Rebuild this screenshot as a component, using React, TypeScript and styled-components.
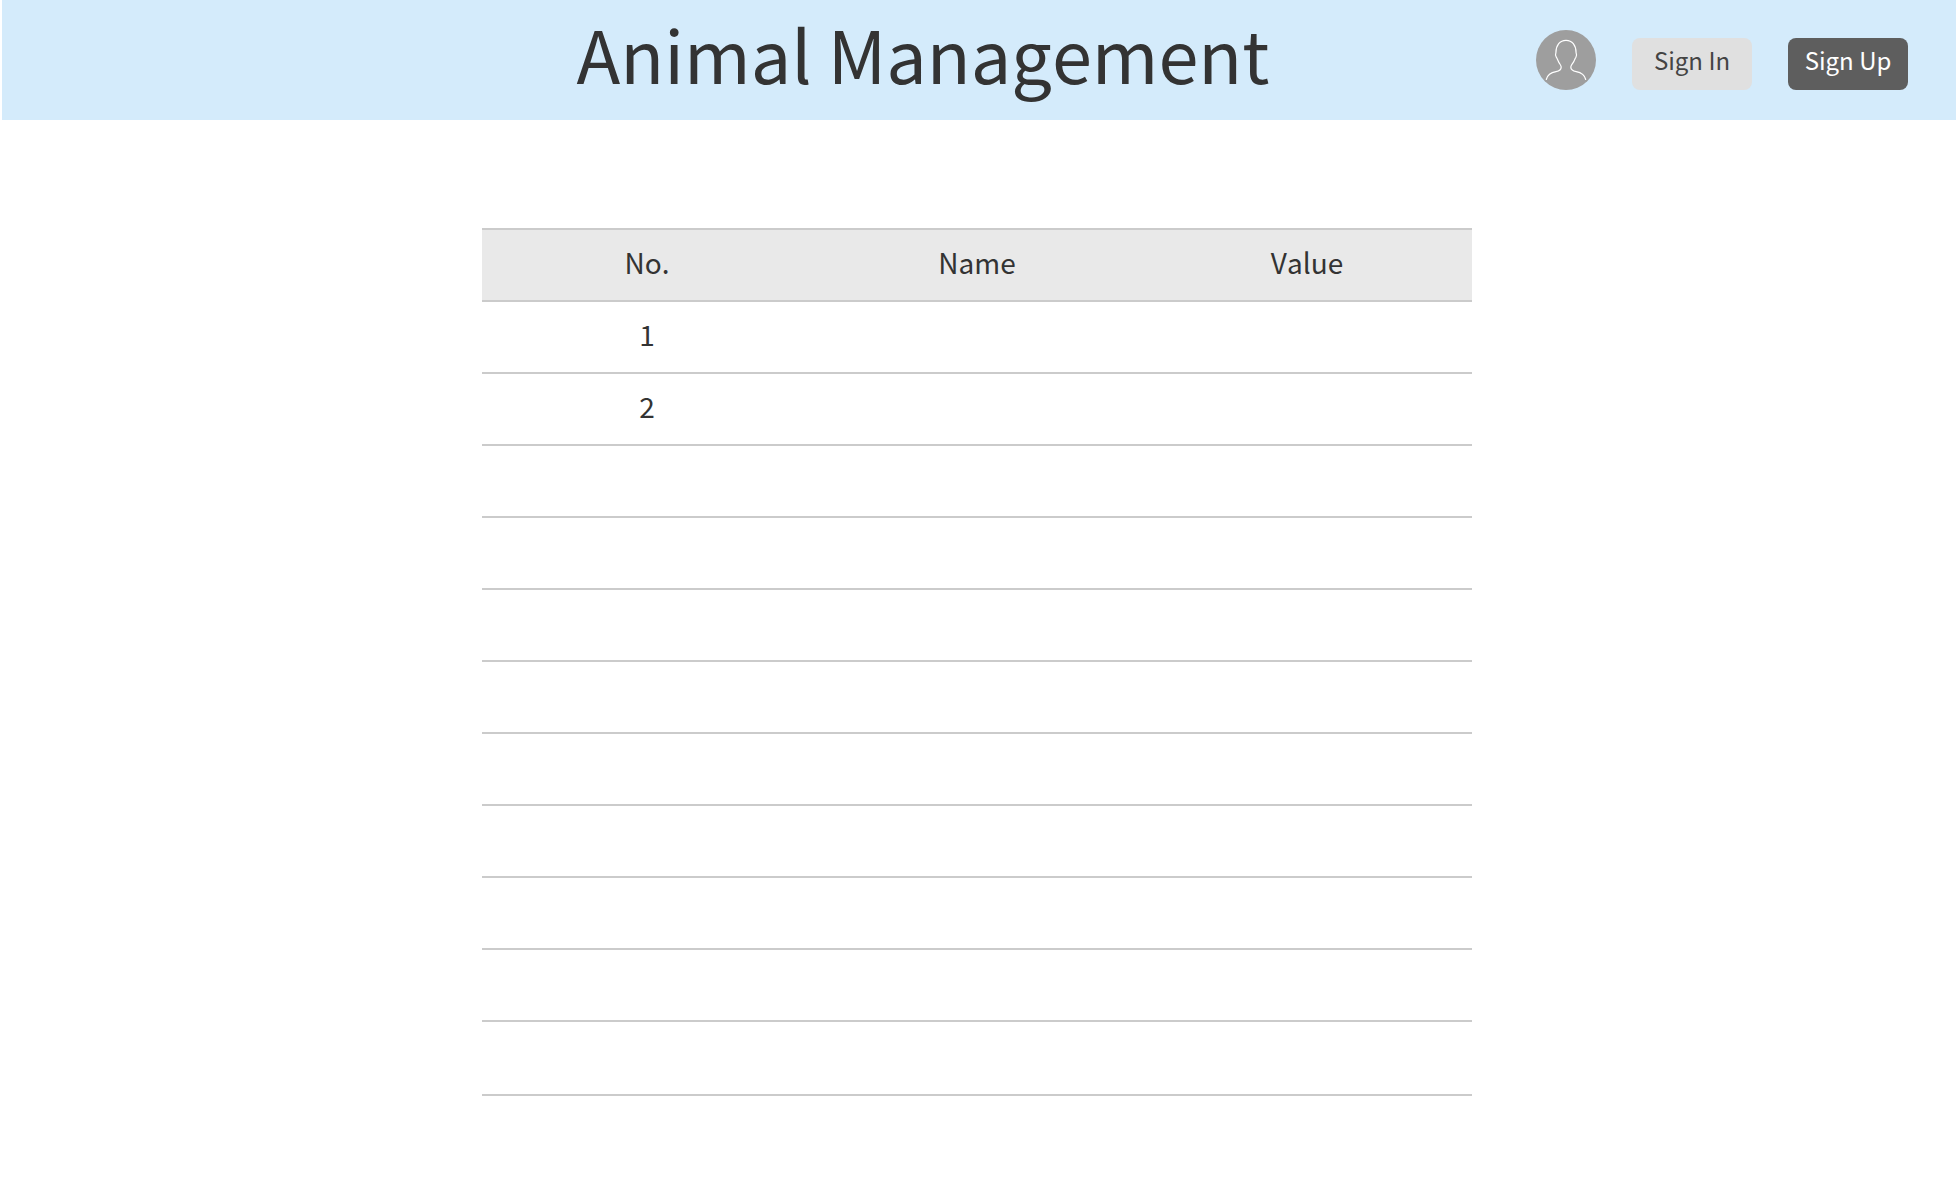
import React from "react";
import styled, { createGlobalStyle } from "styled-components";

const GlobalStyle = createGlobalStyle`
  *, *::before, *::after {
    box-sizing: border-box;
  }
  body {
    margin: 0;
    background: #fff;
    color: #333;
    font-family: "Noto Sans CJK SC", "Noto Sans", sans-serif;
    font-kerning: none;
  }
`;

const Header = styled.header`
  display: flex;
  align-items: center;
  height: 120px;
  margin-left: 2px;
  padding: 0 48px 0 308px;
  background: #d4ebfb;
`;

const Title = styled.h1`
  flex: 1;
  margin: 0;
  padding-bottom: 14px;
  font-size: 72px;
  font-weight: 400;
  line-height: 104px;
  text-align: center;
  white-space: nowrap;
`;

const Actions = styled.nav`
  display: flex;
  align-items: flex-end;
  gap: 36px;
`;

const Avatar = styled.svg`
  display: block;
  width: 60px;
  height: 60px;
`;

const Button = styled.button<{ $primary?: boolean }>`
  width: 120px;
  height: 52px;
  padding: 0 0 8px;
  border: 0;
  border-radius: 8px;
  background: ${(p) => (p.$primary ? "#5e5e5e" : "#e0e0e0")};
  color: ${(p) => (p.$primary ? "#fff" : "#444")};
  font-family: inherit;
  font-size: 24px;
  line-height: 36px;
  cursor: pointer;
`;

const Main = styled.main`
  display: flex;
  justify-content: center;
  padding: 108px 26px 104px 24px;
`;

const Table = styled.table`
  width: 100%;
  max-width: 990px;
  table-layout: fixed;
  border-spacing: 0;
  border-top: 2px solid #cbcbcb;
  font-size: 28px;
  line-height: 42px;
`;

const HeadCell = styled.th`
  height: 72px;
  padding: 0 0 6px;
  border-bottom: 2px solid #cbcbcb;
  background: #e9e9e9;
  font-weight: 400;
  text-align: center;
`;

const Cell = styled.td`
  height: 72px;
  padding: 0 0 6px;
  border-bottom: 2px solid #cbcbcb;
  text-align: center;

  tr:last-child > & {
    height: 74px;
  }
`;

const columns = ["No.", "Name", "Value"];
const rows = ["1", "2", "", "", "", "", "", "", "", "", ""];

export default function App() {
  return (
    <>
      <GlobalStyle />
      <Header>
        <Title>Animal Management</Title>
        <Actions>
          <Avatar viewBox="0 0 60 60" role="img" aria-label="User">
            <circle cx="30" cy="30" r="30" fill="#9e9e9e" />
            <path
              d="M10.3 49.5C11.5 44.5 15.5 42.3 20 41.6C23 41.1 25.2 39.2 25.2 37C25.2 35.3 23.6 34 22.4 31.5C21.6 29.8 21.2 28.5 20.3 27.2C19.2 25.6 19.2 24.3 19.9 22.7C20 15.2 23.8 10.4 30 10.4C36.2 10.4 40 15.2 40.1 22.7C40.8 24.3 40.8 25.6 39.9 27.2C38.9 28.8 38.5 30.3 37.6 31.9C36.6 33.7 34.8 35.2 34.8 37C34.8 39.2 37.4 41.1 40.2 41.6C45 42.5 48.7 44.9 49.7 49.5"
              fill="none"
              stroke="#fff"
              strokeWidth="1.2"
              strokeLinecap="round"
            />
          </Avatar>
          <Button type="button">Sign In</Button>
          <Button type="button" $primary>
            Sign Up
          </Button>
        </Actions>
      </Header>
      <Main>
        <Table>
          <thead>
            <tr>
              {columns.map((column) => (
                <HeadCell key={column} scope="col">
                  {column}
                </HeadCell>
              ))}
            </tr>
          </thead>
          <tbody>
            {rows.map((no, index) => (
              <tr key={index}>
                <Cell>{no}</Cell>
                <Cell />
                <Cell />
              </tr>
            ))}
          </tbody>
        </Table>
      </Main>
    </>
  );
}
